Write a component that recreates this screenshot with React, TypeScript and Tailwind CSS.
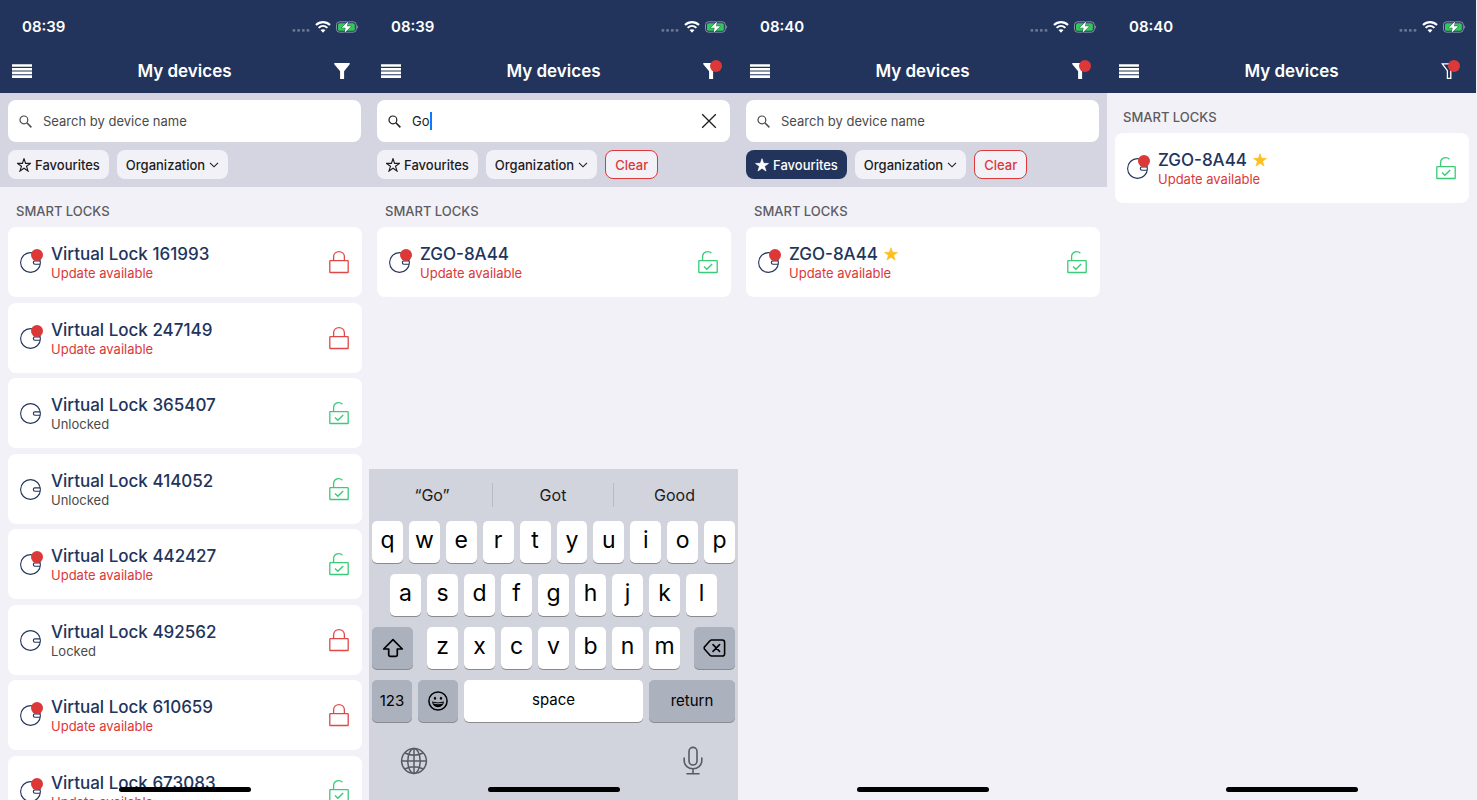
import React from "react";

type Device = {
  name: string;
  status: "Update available" | "Unlocked" | "Locked";
  locked: boolean;
  favourite?: boolean;
};

const allDevices: Device[] = [
  { name: "Virtual Lock 161993", status: "Update available", locked: true },
  { name: "Virtual Lock 247149", status: "Update available", locked: true },
  { name: "Virtual Lock 365407", status: "Unlocked", locked: false },
  { name: "Virtual Lock 414052", status: "Unlocked", locked: false },
  { name: "Virtual Lock 442427", status: "Update available", locked: false },
  { name: "Virtual Lock 492562", status: "Locked", locked: true },
  { name: "Virtual Lock 610659", status: "Update available", locked: true },
  { name: "Virtual Lock 673083", status: "Update available", locked: false },
];

const zgo: Device = { name: "ZGO-8A44", status: "Update available", locked: false };
const zgoFavourite: Device = { ...zgo, favourite: true };

const STAR =
  "M8 0.8 L9.8 6.1 L15.4 6.2 L10.9 9.5 L12.6 14.9 L8 11.7 L3.4 14.9 L5.1 9.5 L0.6 6.2 L6.2 6.1 Z";

function Star({ filled, className }: { filled?: boolean; className: string }) {
  return (
    <svg viewBox="0 0 16 16" className={className} aria-hidden="true">
      <path
        d={STAR}
        fill={filled ? "currentColor" : "none"}
        stroke="currentColor"
        strokeWidth={filled ? "0.8" : "1.3"}
        strokeLinejoin="miter"
      />
    </svg>
  );
}

function StatusBar({ time }: { time: string }) {
  return (
    <div className="flex h-[54px] items-center justify-between pr-2.5 pl-[22px] text-white">
      <span className="text-[15px] leading-5 font-semibold">{time}</span>
      <div className="flex items-center gap-[5px]">
        <svg viewBox="0 0 18 12" className="h-3 w-[18px]" aria-hidden="true">
          {[0, 1, 2, 3].map((i) => (
            <rect key={i} x={0.5 + i * 4.7} y="8" width="2.8" height="2.8" rx="0.8" fill="#69748f" />
          ))}
        </svg>
        <svg viewBox="0 0 16 12" className="h-3 w-4" fill="none" aria-hidden="true">
          <path d="M1 4.1 C5 0.1 11 0.1 15 4.1" stroke="#fff" strokeWidth="2.1" />
          <path d="M3.6 6.9 C6.2 4.4 9.8 4.4 12.4 6.9" stroke="#fff" strokeWidth="2" />
          <path d="M8 11.7 L5.5 9.1 C7 7.8 9 7.8 10.5 9.1 Z" fill="#fff" />
        </svg>
        <svg viewBox="0 0 23 12" className="h-3 w-[23px]" aria-hidden="true">
          <rect x="0.5" y="0.8" width="19.8" height="10.4" rx="3" fill="none" stroke="#8791a7" />
          <rect x="2" y="2.2" width="16.8" height="7.6" rx="1.6" fill="#34c759" />
          <path d="M21.2 4.2 C22.5 4.8 22.5 7.2 21.2 7.8 Z" fill="#8791a7" />
          <path
            d="M12 0.4 L5.6 6.7 H9.6 L8.6 11.8 L15.2 5.2 H11.1 Z"
            fill="#fff"
            stroke="#22345b"
            strokeWidth="0.8"
            paintOrder="stroke"
          />
        </svg>
      </div>
    </div>
  );
}

function Header({ time, badge, outlined }: { time: string; badge?: boolean; outlined?: boolean }) {
  return (
    <header className="h-[93px] shrink-0 bg-[#22345b]">
      <StatusBar time={time} />
      <div className="grid h-[34px] grid-cols-[1fr_auto_1fr] items-center px-3 text-white">
        <button type="button" aria-label="Menu" className="justify-self-start">
          <svg viewBox="0 0 20 14" className="h-3.5 w-5" fill="currentColor" aria-hidden="true">
            <path d="M0 0.2h20v2.6H0zM0 3.9h20v2.6H0zM0 7.6h20v2.6H0zM0 11.3h20v2.6H0z" />
          </svg>
        </button>
        <h1 className="text-[17px] leading-6 font-semibold">My devices</h1>
        <button type="button" aria-label="Filter" className="relative mr-[7px] justify-self-end">
          <svg viewBox="0 0 16 16" className="size-4" aria-hidden="true">
            {outlined ? (
              <path
                d="M1.3 0.8 H14.7 L9.8 7.6 V15.4 H6.4 V7.6 Z"
                fill="none"
                stroke="currentColor"
                strokeWidth="1.3"
              />
            ) : (
              <path d="M0.3 0.1 H15.7 V1.2 L10.1 8.2 V15.9 H6.1 V8.2 L0.3 1.2 Z" fill="currentColor" />
            )}
          </svg>
          {badge && <span className="absolute -top-[3px] -right-[3px] size-3 rounded-full bg-[#dc3838]" />}
        </button>
      </div>
    </header>
  );
}

function Filters({ id, query, favourites, clear }: { id: string; query?: string; favourites?: boolean; clear?: boolean }) {
  return (
    <div className="shrink-0 bg-[#d5d5e1] px-2 pt-[7px] pb-2">
      <div className="flex h-[42px] items-center rounded-lg bg-white pr-3 pl-[11px] text-[13px] leading-5">
        <label htmlFor={id} aria-label="Search by device name" className={query ? "text-[#1c1c1c]" : "text-[#4a4a4a]"}>
          <svg viewBox="0 0 13 13" className="size-[13px]" fill="none" stroke="currentColor" aria-hidden="true">
            <circle cx="4.9" cy="4.9" r="3.9" strokeWidth="1.2" />
            <path d="M7.8 7.8 L12.4 12.4" strokeWidth="1.5" />
          </svg>
        </label>
        {query ? (
          <>
            <input id={id} type="text" defaultValue={query} className="ml-[11px] field-sizing-content text-[#1c1c1c] outline-none" />
            <span className="h-[18px] w-0.5 bg-[#0a7aff]" />
            <button type="button" aria-label="Clear search" className="ml-auto text-[#1c1c1c]">
              <svg viewBox="0 0 18 18" className="size-[18px]" stroke="currentColor" strokeWidth="1.3" aria-hidden="true">
                <path d="M2.2 2.2 L15.8 15.8 M15.8 2.2 L2.2 15.8" />
              </svg>
            </button>
          </>
        ) : (
          <input
            id={id}
            type="text"
            placeholder="Search by device name"
            className="ml-[11px] min-w-0 flex-1 outline-none placeholder:text-[#4a4a4a]"
          />
        )}
      </div>
      <div className="mt-2 flex gap-2 text-[13px] leading-5 font-medium">
        <button
          type="button"
          aria-pressed={!!favourites}
          className={
            favourites
              ? "flex h-[29px] items-center gap-1 rounded-lg bg-[#22345b] px-[9px] text-white"
              : "flex h-[29px] items-center gap-1 rounded-lg bg-[#f2f1f8] px-[9px] text-[#1c1c1c]"
          }
        >
          <Star filled={favourites} className="size-3.5" />
          Favourites
        </button>
        <button type="button" className="flex h-[29px] items-center gap-1 rounded-lg bg-[#f2f1f8] px-[9px] text-[#1c1c1c]">
          Organization
          <svg viewBox="0 0 10 6" className="h-1.5 w-2.5" fill="none" stroke="currentColor" aria-hidden="true">
            <path d="M1 0.8 L5 4.8 L9 0.8" strokeWidth="1.1" />
          </svg>
        </button>
        {clear && (
          <button type="button" className="h-[29px] rounded-lg border border-[#dc3838] bg-[#f2f1f8] px-[9px] text-[#dc3838]">
            Clear
          </button>
        )}
      </div>
    </div>
  );
}

function LockIcon({ locked }: { locked: boolean }) {
  return (
    <svg
      viewBox="0 0 22 24"
      className={locked ? "h-6 w-[22px] text-[#e04848]" : "h-6 w-[22px] text-[#3acb79]"}
      fill="none"
      stroke="currentColor"
      strokeWidth="1.3"
      role="img"
      aria-label={locked ? "Locked" : "Unlocked"}
    >
      <rect x="1.8" y="10.7" width="18.4" height="11.8" rx="0.6" />
      {locked ? (
        <path d="M5.6 10.7 V7 C5.6 -0.2 16.4 -0.2 16.4 7 V10.7" />
      ) : (
        <>
          <path d="M5.6 10.7 V6.8 C5.6 1.6 11.6 0.2 14.4 3.2" />
          <path d="M7 16.6 L9.8 19.2 L15.2 13.9" strokeWidth="1.4" />
        </>
      )}
    </svg>
  );
}

function DeviceCard({ device }: { device: Device }) {
  const update = device.status === "Update available";
  return (
    <li className="flex h-[70px] shrink-0 items-center rounded-lg bg-white pr-3 pl-3 odd:mb-1.5 even:mb-[5px]">
      <span className="relative mr-2.5 size-[21px]">
        <svg viewBox="0 0 21 21" className="size-[21px]" fill="none" stroke="#22345b" strokeWidth="1.1" aria-hidden="true">
          <circle cx="10.5" cy="10.5" r="9.9" />
          <path d="M20.3 8.9 H14.9 C12.8 8.9 12.8 12.3 14.9 12.3 H20.3" />
        </svg>
        {update && <span className="absolute -top-[3px] left-[11px] size-3 rounded-full bg-[#dc3838]" />}
      </span>
      <div className="min-w-0 flex-1 pt-px">
        <h3 className="flex items-center gap-1.5 text-[17px] leading-5 font-medium text-[#22345b]">
          {device.name}
          {device.favourite && <Star filled className="size-3.5 text-[#fdbf1f]" />}
        </h3>
        <p className={update ? "text-[13px] leading-[18px] text-[#dc3838]" : "text-[13px] leading-[18px] text-[#4a4a4a]"}>
          {device.status}
        </p>
      </div>
      <button type="button" aria-label={device.locked ? "Unlock " + device.name : "Lock " + device.name}>
        <LockIcon locked={device.locked} />
      </button>
    </li>
  );
}

function DeviceList({ devices }: { devices: Device[] }) {
  return (
    <section className="flex min-h-0 flex-1 flex-col overflow-hidden pr-[7px] pl-2">
      <h2 className="px-2 pt-3.5 pb-1.5 text-[13px] leading-5 font-medium text-[#5c5c60]">SMART LOCKS</h2>
      <ul className="flex flex-col">
        {devices.map((d) => (
          <DeviceCard key={d.name} device={d} />
        ))}
      </ul>
    </section>
  );
}

function Keys({ letters }: { letters: string }) {
  return (
    <>
      {letters.split("").map((c) => (
        <button
          key={c}
          type="button"
          className="h-[42px] flex-1 rounded-[5px] bg-white pb-1 text-[23px] leading-7 text-black shadow-[0_1px_0_#898a8d]"
        >
          {c}
        </button>
      ))}
    </>
  );
}

const modifierKey =
  "flex h-[42px] items-center justify-center rounded-[5px] bg-[#abb1bd] text-black shadow-[0_1px_0_#898a8d]";

function Keyboard() {
  return (
    <div className="shrink-0 bg-[#d1d4dc] px-[3px] pb-6">
      <div className="grid h-[52px] grid-cols-3 items-center divide-x divide-[#b9bcc5] text-base leading-6 text-[#1c1c1c]">
        <button type="button">“Go”</button>
        <button type="button">Got</button>
        <button type="button">Good</button>
      </div>
      <div className="flex flex-col gap-[11px]">
        <div className="flex gap-1.5">
          <Keys letters="qwertyuiop" />
        </div>
        <div className="flex gap-1.5 px-[18px]">
          <Keys letters="asdfghjkl" />
        </div>
        <div className="flex gap-3.5">
          <button type="button" aria-label="Shift" className={modifierKey + " w-[41px]"}>
            <svg viewBox="0 0 22 20" className="h-5 w-[22px]" fill="none" stroke="currentColor" strokeWidth="1.7" strokeLinejoin="round" aria-hidden="true">
              <path d="M11 1.6 L20.3 11 H15.3 V17 Q15.3 18.3 14 18.3 H8 Q6.7 18.3 6.7 17 V11 H1.7 Z" />
            </svg>
          </button>
          <div className="flex flex-1 gap-1.5">
            <Keys letters="zxcvbnm" />
          </div>
          <button type="button" aria-label="Delete" className={modifierKey + " w-[41px]"}>
            <svg viewBox="0 0 23 18" className="h-[18px] w-[23px]" fill="none" stroke="currentColor" strokeWidth="1.6" strokeLinejoin="round" strokeLinecap="round" aria-hidden="true">
              <path d="M8.6 1 H19.3 Q21.6 1 21.6 3.3 V14.7 Q21.6 17 19.3 17 H8.6 Q7.7 17 7 16.3 L1.6 10.2 Q0.8 9 1.6 7.8 L7 1.7 Q7.7 1 8.6 1 Z" />
              <path d="M10 5.6 L16.6 12.4 M16.6 5.6 L10 12.4" />
            </svg>
          </button>
        </div>
        <div className="flex gap-1.5 text-[15px] leading-5">
          <button type="button" className={modifierKey + " w-10"}>123</button>
          <button type="button" aria-label="Emoji" className={modifierKey + " w-10"}>
            <svg viewBox="0 0 20 20" className="size-5" fill="none" aria-hidden="true">
              <circle cx="10" cy="10" r="9.1" stroke="currentColor" strokeWidth="1.5" />
              <ellipse cx="7" cy="7.2" rx="1.1" ry="1.5" fill="currentColor" />
              <ellipse cx="13" cy="7.2" rx="1.1" ry="1.5" fill="currentColor" />
              <path d="M4 10.6 Q10 12.2 16 10.6 Q15.4 16 10 16.2 Q4.6 16 4 10.6 Z" fill="currentColor" />
              <path d="M5.4 12.2 Q10 13.4 14.6 12.2" stroke="#abb1bd" strokeWidth="0.9" />
            </svg>
          </button>
          <button type="button" className="h-[42px] flex-1 rounded-[5px] bg-white pb-0.5 text-black shadow-[0_1px_0_#898a8d]">
            space
          </button>
          <button type="button" className={modifierKey + " w-[86px]"}>return</button>
        </div>
      </div>
      <div className="flex items-center justify-between px-7 pt-6 text-[#565b65]">
        <button type="button" aria-label="Next keyboard">
          <svg viewBox="0 0 28 28" className="size-7" fill="none" stroke="currentColor" strokeWidth="1.5" aria-hidden="true">
            <circle cx="14" cy="14" r="12.4" />
            <ellipse cx="14" cy="14" rx="6.2" ry="12.4" />
            <path d="M14 1.6 V26.4 M1.6 14 H26.4 M4.8 6 Q14 10.4 23.2 6 M4.8 22 Q14 17.6 23.2 22" />
          </svg>
        </button>
        <button type="button" aria-label="Dictate" className="mr-1">
          <svg viewBox="0 0 20 30" className="h-[30px] w-5" fill="none" stroke="currentColor" strokeWidth="1.6" strokeLinecap="round" aria-hidden="true">
            <rect x="6" y="1.4" width="8" height="17.6" rx="4" />
            <path d="M1.2 12 V14.4 C1.2 25.6 18.8 25.6 18.8 14.4 V12 M10 22.8 V27.8 M4 27.8 H16" />
          </svg>
        </button>
      </div>
    </div>
  );
}

function Phone({ children }: { children: React.ReactNode }) {
  return (
    <div className="relative flex h-full min-w-0 flex-1 flex-col overflow-hidden bg-[#f2f1f8]">
      {children}
      <span className="absolute bottom-2 left-1/2 h-[5px] w-[132px] -translate-x-1/2 rounded-full bg-black" />
    </div>
  );
}

export default function App() {
  return (
    <main className="flex h-screen overflow-hidden bg-[#f2f1f8] pr-px font-['Inter','Liberation_Sans',sans-serif]">
      <Phone>
        <Header time="08:39" />
        <Filters id="search-all" />
        <DeviceList devices={allDevices} />
      </Phone>
      <Phone>
        <Header time="08:39" badge />
        <Filters id="search-query" query="Go" clear />
        <DeviceList devices={[zgo]} />
        <Keyboard />
      </Phone>
      <Phone>
        <Header time="08:40" badge />
        <Filters id="search-favourites" favourites clear />
        <DeviceList devices={[zgoFavourite]} />
      </Phone>
      <Phone>
        <Header time="08:40" badge outlined />
        <DeviceList devices={[zgoFavourite]} />
      </Phone>
    </main>
  );
}
